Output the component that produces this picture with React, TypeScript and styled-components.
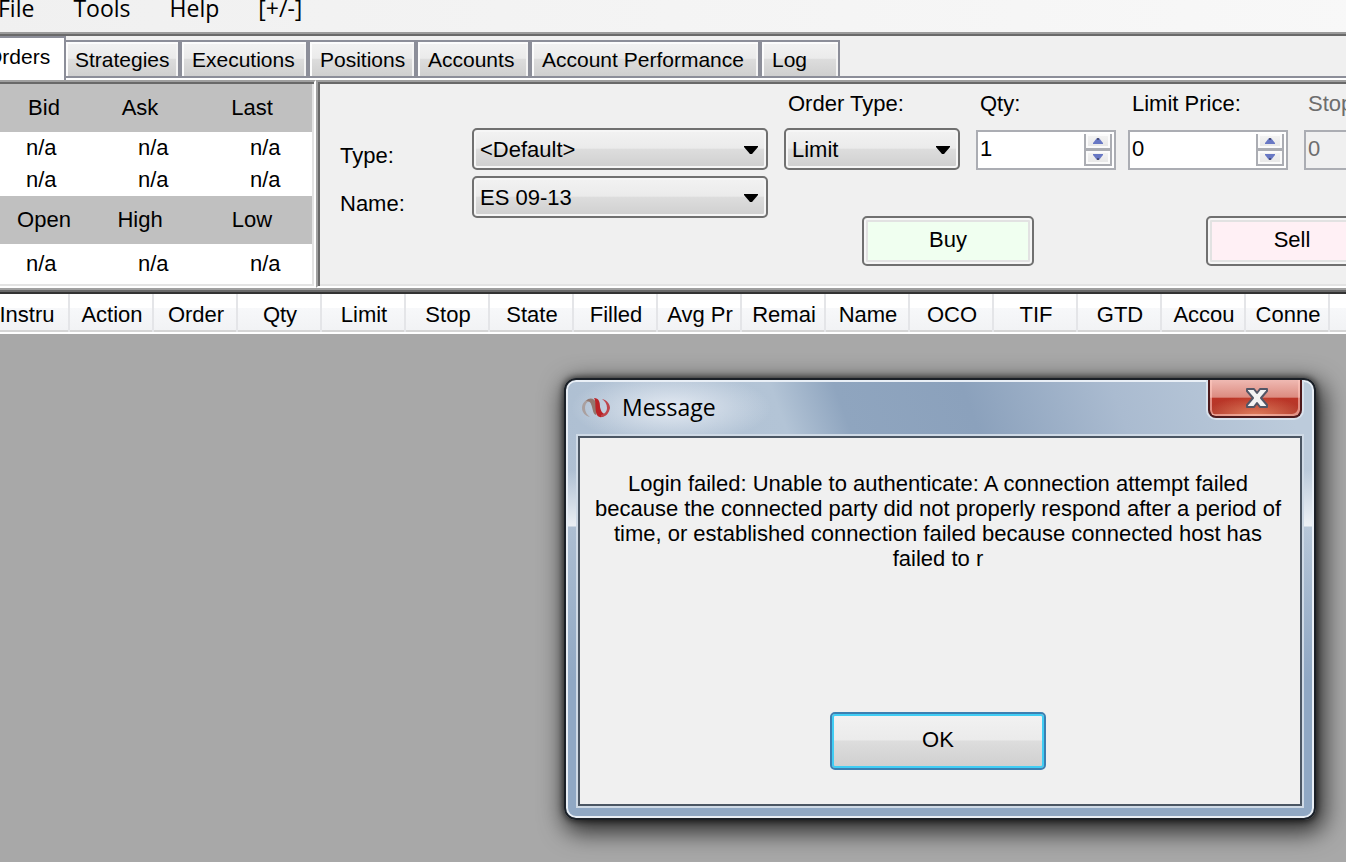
import React from "react";
import styled, { createGlobalStyle, css } from "styled-components";

const UI_FONT = `"Liberation Sans", Arial, sans-serif`;
const SHELL_FONT = `"Open Sans", "Noto Sans", sans-serif`;

const GlobalStyle = createGlobalStyle`
  *, *::before, *::after { box-sizing: border-box; }
  body { margin: 0; background: #a8a8a8; }
  button, input, select { font: inherit; color: inherit; margin: 0; }
`;

const glossy = css`
  background: linear-gradient(#f2f2f2 0%, #ebebeb 48%, #dddddd 50%, #cfcfcf 100%);
`;

const Desktop = styled.div`
  position: relative;
  overflow: hidden;
  min-height: 100vh;
  display: flex;
  font: 22px/24px ${UI_FONT};
  color: #000;
`;

const MainWindow = styled.main`
  flex: 1;
  min-width: 0;
  margin: -8px -16px 0 -16px;
  display: flex;
  flex-direction: column;
`;

const MenuBar = styled.nav`
  height: 40px;
  padding-left: 14px;
  display: flex;
  align-items: flex-start;
  gap: 39px;
  background: linear-gradient(90deg, #f0f0f0, #f8f8f8);
  font-family: ${SHELL_FONT};
  font-size: 23px;
`;

const MenuItem = styled.button`
  border: 0;
  padding: 0;
  background: none;
  line-height: 32px;
`;

const TabStrip = styled.div`
  height: 48px;
  padding-bottom: 2px;
  display: flex;
  align-items: flex-end;
  border-top: 2px solid #9b9b9b;
  background: linear-gradient(#696969 0 2px, #f0f0f0 2px 42px, #8c8e99 42px 44px, #fff 44px);
  font-size: 21px;
`;

const Tab = styled.button<{ $width: number }>`
  width: ${(p) => p.$width}px;
  height: 38px;
  padding: 2px 0 0 10px;
  text-align: left;
  line-height: 32px;
  border: 2px solid #8c8e99;
  ${glossy}
  box-shadow: inset 2px 2px 0 #fcfcfc, inset -2px 0 0 #f4f4f4;
`;

const ActiveTab = styled(Tab)`
  height: 44px;
  margin-bottom: -2px;
  padding: 0 14px 4px 0;
  text-align: right;
  background: #fff;
  border-bottom: 0;
  box-shadow: none;
  & + button { border-left: 0; padding-left: 9px; }
`;

const OrderArea = styled.section`
  display: flex;
  height: 208px;
  background: #f0f0f0;
`;

const sunken = css`
  border: 2px solid;
  border-color: #a0a0a0 #fff #fff #a0a0a0;
  box-shadow: inset 2px 2px 0 #696969, inset -2px -2px 0 #e3e3e3;
`;

const QuotePanel = styled.div`
  flex: none;
  width: 332px;
  background: #fff;
  ${sunken}
  border-left: 0;
  padding: 2px 2px 2px 0;
`;

const QuoteTable = styled.table`
  width: 328px;
  border-collapse: collapse;
  table-layout: fixed;
  th { font-weight: normal; padding: 0; background: #c0c0c0; height: 48px; }
  th:nth-child(1) { width: 112px; padding-left: 8px; }
  th:nth-child(2) { width: 112px; padding-right: 24px; }
  th:nth-child(3) { padding-right: 16px; }
  td { padding: 0 0 0 42px; height: 32px; }
  tr:last-child td { height: 40px; }
`;

const EntryPanel = styled.div`
  flex: 1;
  min-width: 0;
  display: flex;
  gap: 16px;
  padding: 2px 2px 2px 22px;
  ${sunken}
`;

const InstrumentForm = styled.div`
  flex: none;
  display: grid;
  grid-template-columns: 132px 296px;
  grid-auto-rows: 42px;
  align-content: start;
  row-gap: 6px;
  padding-top: 44px;
  label { padding-top: 16px; }
`;

const TicketForm = styled.div`
  flex: none;
`;

const FieldRow = styled.div`
  display: flex;
`;

const Field = styled.div<{ $width: number; $gap: number; $disabled?: boolean }>`
  width: ${(p) => p.$width}px;
  margin-right: ${(p) => p.$gap}px;
  color: ${(p) => (p.$disabled ? "#6d6d6d" : "#000")};
  label { display: block; height: 44px; padding: 8px 0 0 4px; white-space: nowrap; }
`;

const DropDown = styled.div`
  position: relative;
  height: 42px;
  select {
    appearance: none;
    width: 100%;
    height: 42px;
    padding: 2px 40px 0 6px;
    border: 2px solid #707070;
    border-radius: 5px;
    ${glossy}
    box-shadow: inset 0 0 0 2px #f6f6f6;
  }
  svg { position: absolute; right: 10px; top: 18px; pointer-events: none; }
`;

const SpinBox = styled.div<{ $disabled?: boolean }>`
  height: 40px;
  margin-top: 2px;
  display: flex;
  border: 2px solid #abadb3;
  background: ${(p) => (p.$disabled ? "#f0f0f0" : "#fff")};
  input {
    flex: 1;
    min-width: 0;
    padding: 0 0 3px 2px;
    border: 0;
    background: none;
    color: ${(p) => (p.$disabled ? "#6d6d6d" : "#000")};
  }
`;

const SpinButtons = styled.div`
  width: 28px;
  margin: 2px 2px 2px 0;
  display: flex;
  flex-direction: column;
  border: 2px solid #abadb3;
  border-top: 0;
`;

const SpinButton = styled.button`
  flex: 1;
  padding: 0;
  display: grid;
  place-items: center;
  border: 0;
  background: linear-gradient(#f4f4f4, #e6e6e6);
  box-shadow: inset 0 0 0 2px #fbfbfb;
  & + & { border-top: 3px solid #abadb3; }
`;

const TradeButtons = styled.div`
  display: flex;
  gap: 172px;
  padding: 46px 0 0 78px;
`;

const TradeButton = styled.button<{ $tint: string }>`
  width: 172px;
  height: 50px;
  padding: 0 0 2px;
  border: 2px solid #707070;
  border-radius: 5px;
  background: ${(p) => p.$tint};
  box-shadow: inset 0 0 0 2px #f6f6f6, inset 0 0 0 4px #e2e2e2;
`;

const OrdersPane = styled.section`
  padding-top: 4px;
  border-top: 2px solid #a0a0a0;
  background: linear-gradient(#696969 0 2px, #333 2px 4px, #fff 4px);
`;

const OrdersGrid = styled.table`
  width: 100%;
  table-layout: fixed;
  border-collapse: separate;
  border-spacing: 0;
  border-bottom: 2px solid #fff;
  th, td {
    height: 38px;
    padding: 4px 0 0 2px;
    background: linear-gradient(#fff 0 14px, #f7f8fa 14px, #f1f2f4);
    box-shadow: inset 0 -2px 0 #d5d5d5;
  }
  th {
    width: 84px;
    font-weight: normal;
    white-space: nowrap;
    border-right: 2px solid #e4e5e8;
  }
  th:first-child { width: 86px; }
`;

const Dialog = styled.section`
  position: absolute;
  left: 564px;
  top: 378px;
  width: 752px;
  height: 442px;
  padding: 0 12px 12px;
  display: flex;
  flex-direction: column;
  border: 2px solid #1b2027;
  border-radius: 12px;
  background:
    linear-gradient(rgba(255, 255, 255, 0) 50px, rgba(255, 255, 255, 0) 90px, rgba(255, 255, 255, 0.75) 146px, rgba(255, 255, 255, 0) 147px),
    radial-gradient(ellipse 100px 36px at 105px 28px, rgba(240, 244, 250, 0.8), rgba(240, 244, 250, 0)),
    linear-gradient(rgba(140, 165, 195, 0) 140px, #90a8c4 300px),
    linear-gradient(70deg, #aebfd2 100px, #b3c4d6 340px, #8fa5bf 400px, #8ba1bc 520px, #aabbd0 660px, #bccbdb 820px);
  box-shadow: inset 0 0 0 2px #e9eff6, 0 0 6px 1px rgba(0, 0, 0, 0.6), 4px 8px 24px 4px rgba(0, 0, 0, 0.75);
`;

const TitleBar = styled.header`
  height: 56px;
  flex: none;
  display: flex;
  align-items: flex-start;
  font-family: ${SHELL_FONT};
  svg { flex: none; }
`;

const Title = styled.h1`
  flex: 1;
  margin: 0;
  padding-left: 12px;
  font-size: 23px;
  font-weight: normal;
  line-height: 54px;
`;

const AppIcon = styled.svg`
  margin: 17px 0 0 4px;
`;

const CloseButton = styled.button`
  width: 94px;
  height: 38px;
  padding: 0 0 0 4px;
  display: grid;
  place-items: center;
  border: 2px solid #4d1a1c;
  border-top: 0;
  border-radius: 0 0 8px 8px;
  background:
    radial-gradient(ellipse 50px 20px at 50% 100%, rgba(240, 150, 110, 0.75), rgba(230, 120, 90, 0)),
    linear-gradient(#efb9b2 0, #dc8b80 48%, #bb3527 50%, #b03a2c 100%);
  box-shadow: inset 2px 0 0 rgba(255, 200, 190, 0.6), inset -2px -2px 0 rgba(255, 200, 190, 0.6), 0 0 0 2px #d9e2ec;
  clip-path: inset(0 -2px -2px -2px);
`;

const DialogBody = styled.div`
  flex: 1;
  display: flex;
  flex-direction: column;
  align-items: center;
  justify-content: space-between;
  padding: 33px 8px 34px 4px;
  border: 2px solid #4b5663;
  background: #f0f0f0;
  box-shadow: 0 0 0 2px #cfdae6;
`;

const Message = styled.p`
  margin: 0;
  width: 100%;
  line-height: 25px;
  text-align: center;
`;

const OkButton = styled.button`
  width: 216px;
  height: 58px;
  padding: 0 0 2px;
  border: 2px solid #3c7fb1;
  border-radius: 5px;
  ${glossy}
  box-shadow: inset 0 0 0 2px #40cdf4;
`;

const TABS: [string, number][] = [
  ["Strategies", 114],
  ["Executions", 128],
  ["Positions", 108],
  ["Accounts", 114],
  ["Account Performance", 230],
  ["Log", 80],
];

const COLUMNS = [
  "Instru", "Action", "Order", "Qty", "Limit", "Stop", "State", "Filled",
  "Avg Pr", "Remai", "Name", "OCO", "TIF", "GTD", "Accou", "Conne",
];

function Select({ id, value }: { id: string; value: string }) {
  return (
    <DropDown>
      <select id={id} defaultValue={value}>
        <option>{value}</option>
      </select>
      <svg width="14" height="8" viewBox="0 0 14 8" aria-hidden="true">
        <path d="M0 0H14V1L8 8H6L0 1Z" />
      </svg>
    </DropDown>
  );
}

function Spinner({ id, value, disabled }: { id: string; value: string; disabled?: boolean }) {
  return (
    <SpinBox $disabled={disabled}>
      <input id={id} type="text" defaultValue={value} disabled={disabled} />
      <SpinButtons>
        <SpinButton aria-label="Increase" disabled={disabled}>
          <svg width="10" height="6" viewBox="0 0 10 6">
            <path fill="#6878c4" d="M4 0H6L10 5V6H0V5Z" />
            <path fill="#4a5078" d="M4 0H6V2H4Z" />
          </svg>
        </SpinButton>
        <SpinButton aria-label="Decrease" disabled={disabled}>
          <svg width="10" height="6" viewBox="0 0 10 6">
            <path fill="#6878c4" d="M0 0H10V1L6 6H4L0 1Z" />
            <path fill="#4a5078" d="M4 4H6V6H4Z" />
          </svg>
        </SpinButton>
      </SpinButtons>
    </SpinBox>
  );
}

function QuoteRow() {
  return (
    <tr>
      <td>n/a</td>
      <td>n/a</td>
      <td>n/a</td>
    </tr>
  );
}

export default function App() {
  return (
    <Desktop>
      <GlobalStyle />
      <MainWindow>
        <MenuBar>
          <MenuItem>File</MenuItem>
          <MenuItem>Tools</MenuItem>
          <MenuItem>Help</MenuItem>
          <MenuItem>[+/-]</MenuItem>
        </MenuBar>
        <TabStrip role="tablist">
          <ActiveTab $width={82} role="tab" aria-selected="true">Orders</ActiveTab>
          {TABS.map(([label, width]) => (
            <Tab key={label} $width={width} role="tab" aria-selected="false">{label}</Tab>
          ))}
        </TabStrip>
        <OrderArea>
          <QuotePanel>
            <QuoteTable>
              <tbody>
                <tr><th>Bid</th><th>Ask</th><th>Last</th></tr>
                <QuoteRow />
                <QuoteRow />
                <tr><th>Open</th><th>High</th><th>Low</th></tr>
                <QuoteRow />
              </tbody>
            </QuoteTable>
          </QuotePanel>
          <EntryPanel>
            <InstrumentForm>
              <label htmlFor="type">Type:</label>
              <Select id="type" value="<Default>" />
              <label htmlFor="name">Name:</label>
              <Select id="name" value="ES 09-13" />
            </InstrumentForm>
            <TicketForm>
              <FieldRow>
                <Field $width={176} $gap={16}>
                  <label htmlFor="order-type">Order Type:</label>
                  <Select id="order-type" value="Limit" />
                </Field>
                <Field $width={140} $gap={12}>
                  <label htmlFor="qty">Qty:</label>
                  <Spinner id="qty" value="1" />
                </Field>
                <Field $width={160} $gap={16}>
                  <label htmlFor="limit-price">Limit Price:</label>
                  <Spinner id="limit-price" value="0" />
                </Field>
                <Field $width={160} $gap={0} $disabled>
                  <label htmlFor="stop-price">Stop Price:</label>
                  <Spinner id="stop-price" value="0" disabled />
                </Field>
              </FieldRow>
              <TradeButtons>
                <TradeButton $tint="#f0fff0">Buy</TradeButton>
                <TradeButton $tint="#fff0f5">Sell</TradeButton>
              </TradeButtons>
            </TicketForm>
          </EntryPanel>
        </OrderArea>
        <OrdersPane>
          <OrdersGrid>
            <thead>
              <tr>
                {COLUMNS.map((name) => <th key={name} scope="col">{name}</th>)}
                <td />
              </tr>
            </thead>
          </OrdersGrid>
        </OrdersPane>
      </MainWindow>
      <Dialog role="dialog" aria-labelledby="dialog-title">
        <TitleBar>
          <AppIcon width="28" height="22" viewBox="0 0 28 22" fill="none" aria-hidden="true">
            <path d="M8 20C3 19 0 15 0 11C0 6 4 2 8 2L9 4C5 4 3 7 3 11C3 15 5 18 8 20Z" fill="#aaa09f" />
            <path d="M4 4C7 0 13 1 14 6C15 11 16 14 14 18C11 17 11 13 10 10C9 6 8 4 4 4Z" fill="#93776f" />
            <path d="M12 1C17 1 18 5 18 10C19 14 20 17 24 17C20 22 15 21 14 15C13 9 14 4 12 1Z" fill="#bb2226" />
            <path d="M20 2C25 3 28 7 28 11C27 16 24 20 19 20L19 18C23 17 25 14 25 11C25 7 23 4 20 2Z" fill="#bd454b" />
          </AppIcon>
          <Title id="dialog-title">Message</Title>
          <CloseButton aria-label="Close">
            <svg width="24" height="22" viewBox="0 0 24 22">
              <path
                d="M2 2H9L12 6L15 2H22V4L16 11L22 18V20H15L12 16L9 20H2V18L8 11L2 4Z"
                fill="#f3f3f3"
                stroke="#535666"
                strokeWidth="2"
                strokeLinejoin="round"
              />
            </svg>
          </CloseButton>
        </TitleBar>
        <DialogBody>
          <Message>
            Login failed: Unable to authenticate: A connection attempt failed
            <br />
            because the connected party did not properly respond after a period of
            <br />
            time, or established connection failed because connected host has
            <br />
            failed to r
          </Message>
          <OkButton>OK</OkButton>
        </DialogBody>
      </Dialog>
    </Desktop>
  );
}
